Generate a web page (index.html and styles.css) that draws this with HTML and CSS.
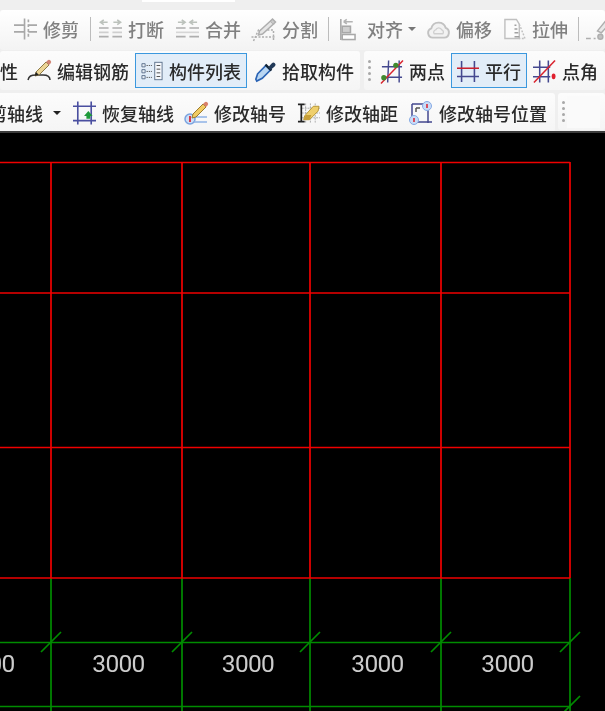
FILE: index.html
```html
<!DOCTYPE html>
<html lang="zh">
<head>
<meta charset="utf-8">
<title>轴网</title>
<link rel="stylesheet" href="styles.css">
</head>
<body>
<header class="toolbar">
  <div class="strip"><div class="strip-tab"></div></div>

  <div class="panel row1">
    <div class="tool off">
      <svg class="ic w23" viewBox="0 0 24 24" fill="none" stroke="#a8a8a8" stroke-width="1.700"><path d="M0 8h11M0 15h11M15 8h9M15 15h9M11 1v22"/><path d="M15 2v20" stroke-dasharray="3 2"/></svg>
      <span>修剪</span>
    </div>
    <div class="sep"></div>
    <div class="tool off">
      <svg class="ic w23" viewBox="0 0 24 24" fill="none" stroke="#aeaeae" stroke-width="1.700"><path d="M0 11h10M14 11h10M0 20h10M14 20h10"/><path d="M9 5H2M5 2.500L1.500 5 5 7.500M15 5h7M19 2.500L22.500 5 19 7.500" stroke="#bcc2bc"/><path d="M0 15.500h10M14 15.500h10" stroke="#cfcfcf"/></svg>
      <span>打断</span>
    </div>
    <div class="tool off">
      <svg class="ic w23" viewBox="0 0 24 24" fill="none" stroke="#aeaeae" stroke-width="1.700"><path d="M0 11h10M14 11h10M0 20h10M14 20h10"/><path d="M2 5h7M6 2.500L9.500 5 6 7.500M22 5h-7M18 2.500L14.500 5 18 7.500" stroke="#bcc2bc"/><path d="M0 15.500h24" stroke="#d6d6d6"/></svg>
      <span>合并</span>
    </div>
    <div class="tool off">
      <svg class="ic w25" viewBox="0 0 24 24" fill="none" stroke="#aeaeae" stroke-width="1.500"><path d="M0 20h24" stroke-dasharray="2 1.500"/><path d="M2 24L7 13h15v11" stroke-dasharray="2 1.500"/><path d="M8 14L19 4l3 3-11 10-4 1z" fill="#e6e6e6"/><path d="M19 4l2-2 3 3-2 2" fill="#cbcbcb"/></svg>
      <span>分割</span>
    </div>
    <div class="sep"></div>
    <div class="tool off">
      <svg class="ic w22" viewBox="0 0 24 24" fill="none" stroke="#a8a8a8" stroke-width="1.700"><path d="M2 1v23"/><path d="M5 4h10M5 4l3.500-2.500M5 4l3.500 2.500" stroke="#b4b4b4"/><rect x="3.500" y="9" width="9" height="7" fill="#cfcfcf"/><rect x="3.500" y="18" width="14" height="5.500" fill="#fff"/></svg>
      <span>对齐</span>
      <i class="caret soft"></i>
    </div>
    <div class="tool off">
      <svg class="ic w23" viewBox="0 0 24 24" fill="none" stroke="#c2c2c2" stroke-width="2"><path d="M6 21a5 5 0 0 1-1.500-9.700 7.800 7.800 0 0 1 15-.5A5.300 5.300 0 0 1 18 21z" fill="#f2f2f2"/><path d="M7.500 17a2.500 2.500 0 0 1 1.500-4 3.500 3.500 0 0 1 6.500 0 2.500 2.500 0 0 1 1 4z" stroke-width="1.400" stroke="#cfcfcf"/></svg>
      <span>偏移</span>
    </div>
    <div class="tool off">
      <svg class="ic w23" viewBox="0 0 24 24" fill="none" stroke="#c0c0c0" stroke-width="1.500"><path d="M2 2h12l3 5v15H2z" fill="#fbfbfb"/><path d="M17 7l6 15h-6" stroke-dasharray="2 1.500"/><path d="M12 8h2M12 12h3M12 16h4M12 20h5" stroke="#a0a0a0"/></svg>
      <span>拉伸</span>
    </div>
    <div class="sep"></div>
    <div class="tool off">
      <svg class="ic w23" viewBox="0 0 24 24" fill="none" stroke="#aeaeae" stroke-width="1.500"><path d="M0 22h5M8 22h2"/><path d="M12 14l8-10 4 3-8 9z" fill="#e8e8e8"/><circle cx="15" cy="20" r="2.600" fill="#c0c0c0"/></svg>
    </div>
  </div>

  <div class="split row2">
    <div class="panel row2a">
      <div class="tool"><span>性</span></div>
      <div class="tool">
        <svg class="ic w24" viewBox="0 0 24 24" fill="none"><path d="M1 21c1-4 3-5 8-5h7c4 0 7 1 7 5" stroke="#333" stroke-width="1.500"/><path d="M9 13L19 3l3 3-10 10-4 1z" fill="#ecd596" stroke="#8d7a48"/><path d="M19 3l1.500-1.500a2 2 0 0 1 3 3L22 6z" fill="#cf8374"/><path d="M7.500 17l1.500-4 3 3z" fill="#222"/></svg>
        <span>编辑钢筋</span>
      </div>
      <div class="tool active">
        <svg class="ic w22" viewBox="0 0 24 24" fill="none" stroke="#5a6f8a"><path d="M1 4h3.500v3.500H1zM1 10.500h3.500V14H1zM1 17h3.500v3.500H1z" fill="#e8eef5"/><path d="M6 6h6M6 12.500h6M6 19h6" stroke="#555" stroke-dasharray="1.500 1"/><rect x="15" y="2.500" width="8" height="19" fill="#f5f8fc"/><path d="M17 6h4M17 10h4M17 14h4M17 18h4" stroke="#444"/></svg>
        <span>构件列表</span>
      </div>
      <div class="tool pad-l">
        <svg class="ic w22" viewBox="0 0 24 24" fill="none"><path d="M4 15L13 6l5 5-9 9-6 3-1-2z" fill="#b9d6f2" stroke="#2a63b4" stroke-width="1.800"/><path d="M12.500 5l6.500 6.500" stroke="#123" stroke-width="2.500"/><path d="M15.500 8l4-4.500a2.300 2.300 0 0 1 3.300 3.300L18 11z" fill="#223a58"/></svg>
        <span>拾取构件</span>
      </div>
    </div>
    <div class="panel row2b">
      <div class="grip"><i></i><i></i><i></i><i></i></div>
      <div class="tool">
        <svg class="ic w23" viewBox="0 0 24 24" fill="none" stroke="#44488f" stroke-width="1.500"><path d="M9 1L8 24M20 1v23M2 7.500h21M2 18.500h21"/><path d="M1 25L24 1" stroke="#d9232e"/><circle cx="4" cy="19" r="2.700" fill="#3f8a2e" stroke="none"/><circle cx="16.500" cy="6" r="2.700" fill="#3f8a2e" stroke="none"/></svg>
        <span>两点</span>
      </div>
      <div class="tool active">
        <svg class="ic w22" viewBox="0 0 24 24" fill="none" stroke="#44488f" stroke-width="1.700"><path d="M5 1v23M19 1v23M0 18h24"/><path d="M0 9h24" stroke="#c9202e"/></svg>
        <span>平行</span>
      </div>
      <div class="tool pad-m">
        <svg class="ic w23" viewBox="0 0 24 24" fill="none" stroke="#44488f" stroke-width="1.600"><path d="M7 1v23M16 1v23M0 8h18M0 18h18"/><path d="M1 24L23 1" stroke="#d9232e"/><ellipse cx="21.500" cy="17.500" rx="2" ry="3" fill="#e0202e" stroke="none"/></svg>
        <span>点角</span>
      </div>
    </div>
  </div>

  <div class="split row3">
    <div class="panel row3a">
      <div class="tool"><span>剪轴线</span></div>
      <div class="tool"><i class="caret"></i></div>
      <div class="tool">
        <svg class="ic w23" viewBox="0 0 24 24" fill="none" stroke="#4a4fa0" stroke-width="1.700"><path d="M5 0v24M19 0v24M0 5h24M0 20h24"/><path d="M16 10l4.500 5H18v3h-4v-3h-2.500z" fill="#1f9a3a" stroke="none"/></svg>
        <span>恢复轴线</span>
      </div>
      <div class="tool">
        <svg class="ic w24" viewBox="0 0 24 24" fill="none"><circle cx="6" cy="18" r="5" fill="#cfdff6" stroke="#7aa3e0" stroke-width="1.500"/><path d="M6 15v6" stroke="#d8202c" stroke-width="1.700"/><path d="M10 16h13M10 21h13" stroke="#8fb2e6" stroke-width="1.300"/><path d="M9 13L19 3l3 3-10 10-4 1z" fill="#f1cb62" stroke="#9a7b2e"/><path d="M19 3l1.500-1.500a2 2 0 0 1 3 3L22 6z" fill="#d9806a"/></svg>
        <span>修改轴号</span>
      </div>
      <div class="tool">
        <svg class="ic w23" viewBox="0 0 24 24" fill="none"><path d="M9 2v20M14 2v20M19 2v20M5 7h19M5 12h19M5 17h19" stroke="#aaa" stroke-dasharray="2 1"/><path d="M1 3h7M1 21h7M4.500 3v18" stroke="#222" stroke-width="1.800"/><path d="M8 15L17 5h6l-1 5-9 9H7z" fill="#efcf6c" stroke="#b69534"/><path d="M7 19l2-5h6l-2 5z" fill="#c79f38"/></svg>
        <span>修改轴距</span>
      </div>
      <div class="tool">
        <svg class="ic w24" viewBox="0 0 24 24" fill="none"><path d="M3 3h17M3 3v15M19 6v16M6 21h17" stroke="#44488f" stroke-width="1.500"/><path d="M7 7h4M7 7v4" stroke="#555" stroke-width="1.500"/><circle cx="18" cy="5" r="4.500" fill="#c9dcf7" stroke="#86aae4"/><path d="M18 3v4" stroke="#d8202c" stroke-width="1.500"/><circle cx="5" cy="19" r="4.500" fill="#c9dcf7" stroke="#86aae4"/><path d="M5 17v4" stroke="#d8202c" stroke-width="1.500"/></svg>
        <span>修改轴号位置</span>
      </div>
    </div>
    <div class="panel row3b">
      <div class="grip"><i></i><i></i><i></i><i></i></div>
      <div class="fade"></div>
    </div>
  </div>
</header>

<main class="canvas">
  <svg class="cad" viewBox="0 133 605 578" width="605" height="578">
    <g class="green">
      <path d="M51 578V711M182 578V711M310 578V711M441 578V711M570 578V711"/>
      <path d="M0 642.500H570M0 706.500H570"/>
      <path d="M41 652L61 632M172 652L192 632M300 652L320 632M431 652L451 632M560 652L580 632M560 716L580 696"/>
    </g>
    <g class="red">
      <path d="M51 162V578M182 162V578M310 162V578M441 162V578M570 162V578"/>
      <path d="M0 162.500H570M0 293H570M0 447.500H570M0 578H570"/>
    </g>
    <g class="dims">
      <text x="-11.500" y="672">3000</text>
      <text x="118.500" y="672">3000</text>
      <text x="248" y="672">3000</text>
      <text x="377.500" y="672">3000</text>
      <text x="507.500" y="672">3000</text>
    </g>
  </svg>
</main>
</body>
</html>
```

FILE: styles.css
```css
html, body {
  margin: 0;
  padding: 0;
  height: 100%;
  overflow: hidden;
  background: #000;
}

body {
  width: 605px;
  height: 711px;
  font-family: "Noto Sans CJK SC", "Liberation Sans", sans-serif;
  font-size: 18px;
  font-weight: 500;
  color: #2a2a2a;
}

.toolbar {
  height: 131px;
  overflow: hidden;
  background: #efefef;
  border-bottom: 2px solid #3c3c3c;
  filter: blur(0.45px);
}

.strip {
  height: 10px;
}

.strip-tab {
  width: 93px;
  height: 2px;
  margin-left: 142px;
  background: #fff;
}

.panel {
  display: grid;
  align-items: center;
  box-sizing: border-box;
  border-radius: 3px;
  background: linear-gradient(#fcfcfc, #f5f5f5);
}

.row1 {
  height: 40px;
  padding-left: 14px;
  padding-bottom: 3px;
  background: linear-gradient(#fff, #f3f3f3);
  grid-template-columns: 76px 9px 77px 75px 77px 11px 88px 76px 75px 8px 30px;
}

.split {
  display: flex;
  gap: 4px;
  height: 39px;
}

.row2 {
  margin-top: 1px;
}

.row3 {
  margin-top: 3px;
}

.row2a {
  width: 360px;
  flex: none;
  grid-template-columns: 27px 108px 112px 113px;
}

.row2b {
  flex: 1;
  grid-template-columns: 16px 71px 76px 78px;
}

.row3a {
  width: 566px;
  flex: none;
  margin-left: -11px;
  grid-template-columns: 62px 22px 111px 113px 112px 146px;
}

.row3b {
  flex: 1;
  grid-template-columns: 9px 1fr;
  height: 37px;
  margin-left: -1px;
}

.tool {
  display: flex;
  align-items: center;
  gap: 6px;
  height: 34px;
  white-space: nowrap;
}

.off {
  color: #808080;
}

.active {
  box-sizing: border-box;
  height: 35px;
  padding-left: 5px;
  border: 1.500px solid #3b98de;
  background: #e2edf8;
}

.pad-l {
  padding-left: 7px;
}

.pad-m {
  padding-left: 6px;
}

.ic {
  flex: none;
  height: 24px;
  overflow: visible;
}

.w22 { width: 22px; }
.w23 { width: 23px; }
.w24 { width: 24px; }
.w25 { width: 25px; }

.sep {
  width: 1px;
  height: 24px;
  background: #bcbcbc;
}

.caret {
  display: block;
  width: 0;
  height: 0;
  margin-left: 2px;
  border-left: 4px solid transparent;
  border-right: 4px solid transparent;
  border-top: 4px solid #222;
}

.caret.soft {
  margin-left: -1px;
  border-top-color: #777;
}

.grip {
  display: flex;
  flex-direction: column;
  gap: 3px;
  padding-left: 4px;
}

.grip i {
  display: block;
  width: 3px;
  height: 3px;
  background: #a8a8a8;
  border-radius: 50%;
}

.fade {
  height: 32px;
  margin-right: 5px;
  background: #fafafa;
}

.canvas {
  height: 578px;
  background: #000;
}

.cad {
  display: block;
}

.cad path {
  fill: none;
}

.red path {
  stroke: #f00000;
  stroke-width: 1.700;
}

.green path {
  stroke: #008c00;
  stroke-width: 1.700;
}

.dims text {
  fill: #cccccc;
  font-family: Roboto, "Liberation Sans", sans-serif;
  font-size: 24.500px;
  font-weight: 400;
  text-anchor: middle;
  letter-spacing: -0.700px;
  filter: blur(0.350px);
}
```
